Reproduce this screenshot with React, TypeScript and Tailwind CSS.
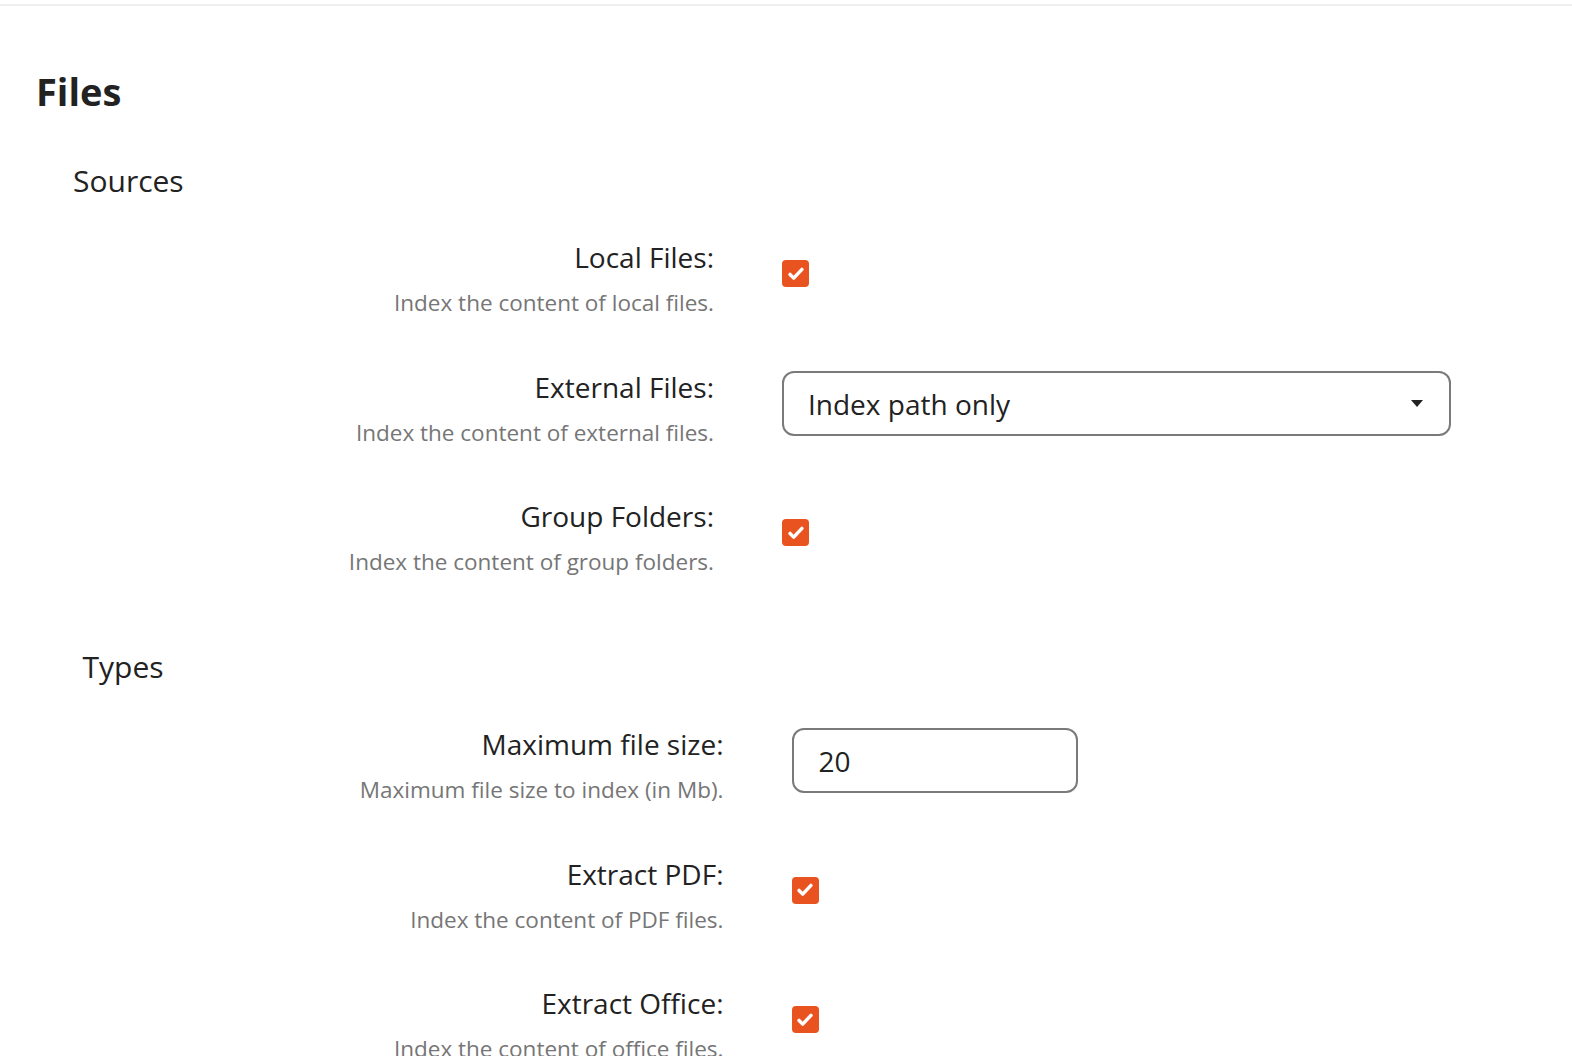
import type { ReactNode } from "react";

const FONT = { fontFamily: '"Open Sans", "Noto Sans", sans-serif' };

function Checkbox() {
  return (
    <div className="mt-[18px] flex h-[27px] w-[27px] items-center justify-center rounded-[4px] bg-[#e9531f]">
      <svg viewBox="0 0 24 24" className="h-[22px] w-[22px]" fill="none" stroke="#fff" strokeWidth="3.8" strokeLinecap="round" strokeLinejoin="round">
        <path d="M5.5 12.5l4 4L18.5 7" />
      </svg>
    </div>
  );
}

function Row({ label, desc, children }: { label: string; desc: string; children: ReactNode }) {
  return (
    <div className="flex items-start">
      <div className="w-[714px] shrink-0 text-right">
        <div className="text-[28px] leading-[30px] text-[#222]">{label}</div>
        <div className="mt-[17px] text-[22.5px] leading-[28px] text-[#767676]">{desc}</div>
      </div>
      <div className="ml-[68px]">{children}</div>
    </div>
  );
}

export default function App() {
  return (
    <div className="flex min-h-screen flex-col overflow-hidden bg-white" style={FONT}>
      <div className="mt-[4px] h-[2px] bg-[#efefef]" />
      <h1 className="ml-[36px] mt-[65px] text-[38px] font-bold leading-[40px] text-[#222]">Files</h1>

      <h2 className="ml-[73px] mt-[54px] text-[30px] leading-[32px] text-[#222]">Sources</h2>
      <div className="mt-[45px] flex flex-col gap-[54.5px]">
        <Row label="Local Files:" desc="Index the content of local files.">
          <Checkbox />
        </Row>
        <Row label="External Files:" desc="Index the content of external files.">
          <div className="mt-[-0.5px] flex h-[65px] w-[669px] items-center justify-between rounded-[12px] border-2 border-[#7a7a7a] pl-[24px] pr-[26px]">
            <span className="text-[28px] text-[#222]">Index path only</span>
            <svg viewBox="0 0 12 7" className="h-[7px] w-[12px]">
              <path d="M0 0h12L6 7z" fill="#222" />
            </svg>
          </div>
        </Row>
        <Row label="Group Folders:" desc="Index the content of group folders.">
          <Checkbox />
        </Row>
      </div>

      <div className="flex flex-col pl-[9.5px]">
        <h2 className="ml-[73px] mt-[75px] text-[30px] leading-[32px] text-[#222]">Types</h2>
        <div className="mt-[46px] flex flex-col gap-[54.5px]">
          <Row label="Maximum file size:" desc="Maximum file size to index (in Mb).">
            <div className="mt-[-1px] flex h-[65px] w-[286px] items-center rounded-[12px] border-2 border-[#7a7a7a] pl-[25px]">
              <span className="text-[28px] text-[#222]">20</span>
            </div>
          </Row>
          <Row label="Extract PDF:" desc="Index the content of PDF files.">
            <Checkbox />
          </Row>
          <Row label="Extract Office:" desc="Index the content of office files.">
            <Checkbox />
          </Row>
        </div>
      </div>
    </div>
  );
}
